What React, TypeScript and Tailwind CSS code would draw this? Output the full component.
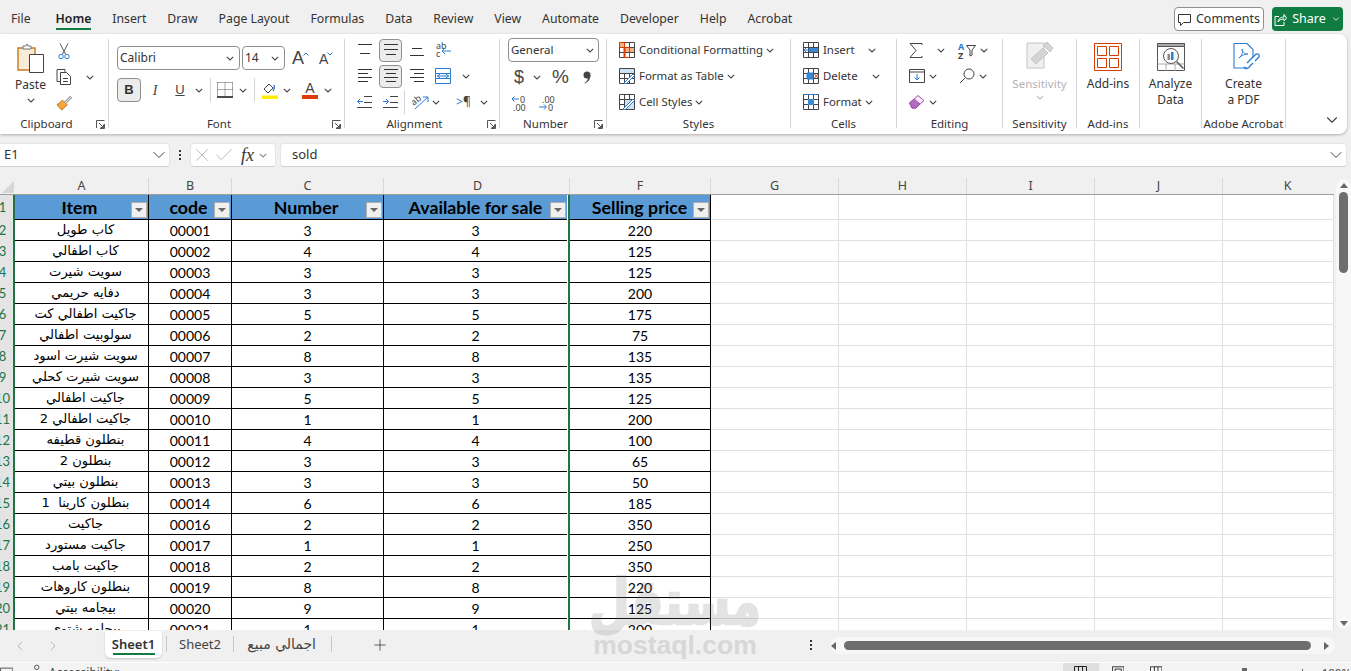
import { ChevronDown, ChevronLeft, ChevronRight, Plus, X, Check } from 'lucide-react';

const tabs = ['Review', 'View', 'Automate', 'Developer', 'Help', 'Acrobat'];

const items = [
  'كاب طويل', 'كاب اطفالي', 'سويت شيرت', 'دفايه حريمي', 'جاكيت اطفالي كت', 'سولوبيت اطفالي', 'سويت شيرت اسود',
  'سويت شيرت كحلي', 'جاكيت اطفالي', 'جاكيت اطفالي 2', 'بنطلون قطيفه', 'بنطلون 2', 'بنطلون بيتي', 'بنطلون كارينا  1',
  'جاكيت', 'جاكيت مستورد', 'جاكيت بامب', 'بنطلون كاروهات', 'بيجامه بيتي', 'بيجامه شتوي',
];
const codes = ['00001', '00002', '00003', '00004', '00005', '00006', '00007', '00008', '00009', '00010', '00011', '00012', '00013', '00014', '00016', '00017', '00018', '00019', '00020', '00021'];
const numbers = [3, 4, 3, 3, 5, 2, 8, 3, 5, 1, 4, 3, 3, 6, 2, 1, 2, 8, 9, 1];
const prices = [220, 125, 125, 200, 175, 75, 135, 135, 125, 200, 100, 65, 50, 185, 350, 250, 350, 220, 125, 200];

function Chev({ className = 'text-[#444]' }: { className?: string }) {
  return (
    <svg width="8" height="5" viewBox="0 0 8 5" className={className} fill="none" stroke="currentColor" strokeWidth="1.1">
      <path d="M0.8 0.8 4 4 7.2 0.8" />
    </svg>
  );
}

function Launcher() {
  return (
    <svg width="9" height="9" viewBox="0 0 9 9" fill="none" stroke="#555" strokeWidth="1">
      <path d="M0.5 8V0.5H8.5M8.5 4V8.5H4M3 3l4.5 4.5M7.5 4.5v3h-3" />
    </svg>
  );
}

function Group({ label, launcher, className, children }: { label?: string; launcher?: boolean; className: string; children: React.ReactNode }) {
  return (
    <div className={`h-[89px] shrink-0 border-r border-[#d4d4d4] flex flex-col ${className}`}>
      <div className="h-[78px] shrink-0">{children}</div>
      <div className="h-[14px] shrink-0 flex items-center text-[11.5px] leading-[14px] text-[#333] whitespace-nowrap">
        <div className="flex-1 text-center">{label}</div>
        {launcher && (
          <div className="w-[15px] flex justify-center">
            <Launcher />
          </div>
        )}
      </div>
    </div>
  );
}

function Lines({ rows }: { rows: number[][] }) {
  return (
    <svg width="16" height="16" viewBox="0 0 16 16" stroke="#333" strokeWidth="1">
      {rows.map((r, i) => (
        <path key={i} d={`M${r[0]} ${r[2] + 0.5}H${r[1]}`} />
      ))}
    </svg>
  );
}

function GridIcon({ children }: { children?: React.ReactNode }) {
  return (
    <svg width="16" height="16" viewBox="0 0 16 16" fill="none" stroke="#444" strokeWidth="1">
      <path d="M0.5 0.5h15v15h-15zM0.5 5.5h15M0.5 10.5h15M5.5 0.5v15M10.5 0.5v15" />
      {children}
    </svg>
  );
}

function StyleRow({ icon, text }: { icon: React.ReactNode; text: string }) {
  return (
    <div className="h-[22px] flex items-center">
      {icon}
      <span className="ml-[4px] mr-[3px] text-[11.4px] text-[#333]">{text}</span>
      <Chev />
    </div>
  );
}

function HeaderCell({ className, text }: { className: string; text: string }) {
  return (
    <div className={`relative h-full shrink-0 bg-[#5b9bd5] border-b border-black flex items-center justify-center text-[17.8px] font-bold text-black ${className}`}>
      {text}
      <div className="absolute right-[1px] top-[7px] w-[16px] h-[16px] bg-[#f0f0f0] border border-[#b0b0b0] flex items-center justify-center">
        <div className="w-0 h-0 border-l-[4px] border-r-[4px] border-t-[4px] border-l-transparent border-r-transparent border-t-[#666]" />
      </div>
    </div>
  );
}

function Marker() {
  return <div className="w-[3px] h-full shrink-0 bg-[#217346] border-l border-white" />;
}

function EmptyCells() {
  return (
    <>
      <div className="w-[128px] h-full shrink-0 border-r border-b border-[#e0e0e0]" />
      <div className="w-[128px] h-full shrink-0 border-r border-b border-[#e0e0e0]" />
      <div className="w-[128px] h-full shrink-0 border-r border-b border-[#e0e0e0]" />
      <div className="w-[128px] h-full shrink-0 border-r border-b border-[#e0e0e0]" />
      <div className="w-[111px] h-full shrink-0 border-r border-b border-[#e0e0e0]" />
    </>
  );
}

function RowNum({ n }: { n: number }) {
  return (
    <div className="w-[15px] h-full shrink-0 bg-[#e4e4e4] border-r-2 border-[#217346] overflow-hidden flex justify-start items-center text-[13px] text-[#217346]">
      <div className="w-[5px] flex justify-center">
        <span>{n}</span>
      </div>
    </div>
  );
}

function ColHead({ className, text }: { className: string; text: string }) {
  return <div className={`h-full shrink-0 border-r border-[#d8d8d8] flex items-center justify-center text-[12.5px] text-[#444] ${className}`}>{text}</div>;
}

export default function App() {
  return (
    <div className="relative w-[1351px] h-[671px] overflow-hidden bg-[#f0f0f0] flex flex-col font-['Noto_Sans','DejaVu_Sans',sans-serif] text-[#333]">
      {/* tabs */}
      <div className="h-[34px] flex shrink-0 text-[12.25px] text-[#333]">
        <div className="flex gap-[21px] pl-[11px] pt-[10px] leading-[18px] flex-1">
          <span className="mr-[4px]">File</span>
          <span className="relative font-semibold text-[#222]">
            Home
            <span className="absolute left-0 right-0 top-[18px] h-[2px] bg-[#107c41]" />
          </span>
          <span>Insert</span>
          <span>Draw</span>
          <span>Page Layout</span>
          <span>Formulas</span>
          <span>Data</span>
          {tabs.map((t) => (
            <span key={t}>{t}</span>
          ))}
        </div>
        <div className="flex pt-[7px] pr-[8px] gap-[8px] text-[12.5px]">
          <div className="w-[90px] h-[24px] bg-white border border-[#8f8f8f] rounded-[4px] flex items-center justify-center gap-[5px]">
            <svg width="13" height="13" viewBox="0 0 13 13" fill="none" stroke="#333">
              <path d="M0.5 1.5h12v8h-7l-3 3v-3h-2z" />
            </svg>
            Comments
          </div>
          <div className="w-[71px] h-[24px] bg-[#107c41] rounded-[4px] flex items-center justify-center gap-[5px] text-white">
            <svg width="13" height="13" viewBox="0 0 13 13" fill="none" stroke="#fff">
              <path d="M5 3.5H1v9h9V9M4 9c0-3 3-5 6-5V1.5L12.5 5 10 8V6C7.500 6 5 7 4 9z" />
            </svg>
            Share
            <ChevronDown size={10} />
          </div>
        </div>
      </div>

      {/* ribbon */}
      <div className="relative h-[100px] w-[1347px] shrink-0 bg-white rounded-r-[8px] shadow-[0_1px_3px_rgba(0,0,0,0.28)] flex pt-[5px]">
        <Group label="Clipboard" launcher className="w-[109px]">
          <div className="flex pl-[14px]">
            <div className="w-[33px] flex flex-col items-center pt-[4px]">
              <svg width="28" height="31" viewBox="0 0 28 31" fill="none">
                <path d="M1 5h17v22H1z" fill="#f8ecd8" stroke="#c67a1f" strokeWidth="1.4" />
                <path d="M6 5V3h3l1-2 1 2h3v3H6z" fill="#fff" stroke="#777" />
                <path d="M12.500 11.500h14v18h-14z" fill="#fff" stroke="#444" />
              </svg>
              <span className="text-[12px] leading-[18px] mt-[2px]">Paste</span>
              <div className="mt-[4px]"><Chev /></div>
            </div>
            <div className="ml-[9px] mt-px flex flex-col gap-[4px]">
              <div className="h-[22px] w-[16px] flex items-center justify-center">
                <svg width="12" height="17" viewBox="0 0 12 17" fill="none" stroke="#555">
                  <path d="M2 0.500 7.500 11M10 0.500 4.500 11" />
                  <circle cx="3" cy="13.500" r="2.200" stroke="#2b7cd3" />
                  <circle cx="9" cy="13.500" r="2.200" stroke="#2b7cd3" />
                </svg>
              </div>
              <div className="h-[22px] flex items-center w-[38px]">
                <svg width="16" height="16" viewBox="0 0 16 16" fill="none" stroke="#444">
                  <path d="M4 12.500H1V0.500h8v3" />
                  <path d="M4.500 3.500h6l4 4v8h-10z" fill="#fff" />
                  <path d="M7 9.500h5M7 12.500h5" />
                </svg>
                <div className="ml-[14px]"><Chev /></div>
              </div>
              <div className="h-[22px] w-[16px] flex items-center justify-center">
                <svg width="17" height="16" viewBox="0 0 17 16" fill="none">
                  <path d="M1 10 7 5l5 5-6 5.500L1 10z" fill="#f2a93b" stroke="#c9702a" />
                  <path d="M9 7l6-6 1.500 1.500-6 6" fill="#eee" stroke="#666" />
                </svg>
              </div>
            </div>
          </div>
        </Group>

        <Group label="Font" launcher className="w-[236px]">
          <div className="pl-[8px] pt-[7px] flex flex-col gap-[8px]">
            <div className="flex items-center h-[24px]">
              <div className="w-[123px] h-[24px] border border-[#8f8f8f] rounded-[4px] flex items-center justify-between px-[2px] pr-[5px] text-[12px]">
                <span className="text-[12px]">Calibri</span>
                <Chev />
              </div>
              <div className="ml-[2px] w-[43px] h-[24px] border border-[#8f8f8f] rounded-[4px] flex items-center justify-between px-[2px] pr-[5px] text-[12px]">
                <span>14</span>
                <Chev />
              </div>
              <div className="ml-[7px] w-[17px] flex items-start">
                <span className="text-[18px] leading-[22px] font-['Liberation_Sans'] text-[#444]">A</span>
                <svg className="mt-[5px] -ml-[1px] shrink-0" width="6" height="4" viewBox="0 0 6 4" fill="none" stroke="#2b7cd3"><path d="M0.500 3.500 3 1l2.500 2.500" /></svg>
              </div>
              <div className="ml-[10px] w-[17px] flex items-start">
                <span className="text-[14px] leading-[22px] mt-[1px] font-['Liberation_Sans'] text-[#444]">A</span>
                <svg className="mt-[5px] -ml-[1px] shrink-0" width="6" height="4" viewBox="0 0 6 4" fill="none" stroke="#2b7cd3"><path d="M0.500 0.500 3 3l2.500-2.500" /></svg>
              </div>
            </div>
            <div className="flex items-center h-[24px]">
              <div className="w-[24px] h-[24px] bg-[#ececec] border border-[#8f8f8f] rounded-[4px] flex items-center justify-center text-[13px] font-bold font-['Liberation_Sans']">B</div>
              <span className="ml-[9px] w-[10px] text-[14px] text-center italic font-['Liberation_Serif'] text-[#444]">I</span>
              <span className="ml-[15px] w-[10px] text-[13px] text-center underline font-['Liberation_Sans'] text-[#444]">U</span>
              <div className="ml-[10px]"><Chev /></div>
              <div className="ml-[7px] w-px h-[24px] bg-[#d4d4d4]" />
              <svg className="ml-[6px]" width="16" height="16" viewBox="0 0 16 16" fill="none" stroke="#555">
                <path d="M0.500 0.500h15M0.500 0.500v13M15.500 0.500v13M8 0.500v13M0.500 7.500h15" strokeDasharray="1 1" />
                <path d="M0 15h16" stroke="#111" strokeWidth="1.500" />
              </svg>
              <div className="ml-[6px]"><Chev /></div>
              <div className="ml-[7px] w-px h-[24px] bg-[#d4d4d4]" />
              <svg className="ml-[6px]" width="17" height="17" viewBox="0 0 17 17" fill="none">
                <path d="M3 7l5-5 4 4-5 5z" stroke="#444" />
                <path d="M12 9c1-2 2-3 1-6" stroke="#2b7cd3" strokeWidth="1.400" />
                <path d="M1 13.500h16V17H1z" fill="#ffee00" />
              </svg>
              <div className="ml-[5px]"><Chev /></div>
              <div className="ml-[11px] w-[16px] flex flex-col items-center">
                <span className="text-[14px] leading-[13px] font-['Liberation_Sans'] text-[#444]">A</span>
                <span className="w-[16px] h-[4px] bg-[#e03a0b]" />
              </div>
              <div className="ml-[6px]"><Chev /></div>
            </div>
          </div>
        </Group>

        <Group label="Alignment" launcher className="w-[155px]">
          <div className="pl-[8px] flex flex-col gap-[4px]">
            <div className="h-[22px] flex items-center">
              <div className="w-[23px] flex justify-center"><Lines rows={[[1, 15, 2], [3, 13, 11]]} /></div>
              <div className="ml-[3px] w-[23px] h-[23px] bg-[#ececec] border border-[#8f8f8f] rounded-[4px] flex items-center justify-center"><Lines rows={[[1, 15, 2], [1, 15, 7], [3, 13, 12]]} /></div>
              <div className="ml-[3px] w-[23px] flex justify-center"><Lines rows={[[3, 13, 6], [1, 15, 13]]} /></div>
              <div className="ml-[3px] w-[23px] flex justify-center">
                <svg width="16" height="18" viewBox="0 0 16 18">
                  <text x="1" y="8" fontSize="9" fill="#444">ab</text>
                  <text x="1" y="16" fontSize="9" fill="#444">c</text>
                  <path d="M16 10H8M10 7l-3 3 3 3" fill="none" stroke="#2b7cd3" />
                </svg>
              </div>
            </div>
            <div className="h-[22px] flex items-center">
              <div className="w-[23px] flex justify-center"><Lines rows={[[1, 15, 1], [1, 11, 5], [1, 15, 9], [1, 11, 13]]} /></div>
              <div className="ml-[3px] w-[23px] h-[23px] bg-[#ececec] border border-[#8f8f8f] rounded-[4px] flex items-center justify-center"><Lines rows={[[1, 15, 1], [3, 13, 5], [1, 15, 9], [3, 13, 13]]} /></div>
              <div className="ml-[3px] w-[23px] flex justify-center"><Lines rows={[[1, 15, 1], [5, 15, 5], [1, 15, 9], [5, 15, 13]]} /></div>
              <div className="ml-[3px] w-[23px] flex justify-center">
                <svg width="16" height="16" viewBox="0 0 16 16" fill="none" stroke="#2b7cd3">
                  <path d="M0.500 0.500h15v15H0.500zM0.500 5.500h15M0.500 10.500h15" />
                  <path d="M2 8h12M5 6 2.500 8 5 10M11 6l2.500 2L11 10" />
                </svg>
              </div>
              <div className="ml-[8px]"><Chev /></div>
            </div>
            <div className="h-[22px] flex items-center">
              <div className="w-[23px] flex justify-center">
                <svg width="15" height="14" viewBox="0 0 15 14" fill="none" stroke="#444">
                  <path d="M7 1.500h8M7 7.500h8M0 12.500h15" />
                  <path d="M6 6.500H0.500M3 4 .5 6.500 3 9" stroke="#2b7cd3" />
                </svg>
              </div>
              <div className="ml-[3px] w-[23px] flex justify-center">
                <svg width="15" height="14" viewBox="0 0 15 14" fill="none" stroke="#444">
                  <path d="M7 1.500h8M7 7.500h8M0 12.500h15" />
                  <path d="M0 6.500h5.500M3 4l2.500 2.500L3 9" stroke="#2b7cd3" />
                </svg>
              </div>
              <div className="ml-[2px] w-px h-[24px] bg-[#d4d4d4]" />
              <div className="ml-[7px] w-[17px] flex justify-center">
                <svg width="17" height="17" viewBox="0 0 17 17" fill="none">
                  <text x="0" y="9" fontSize="9" fill="#444" transform="rotate(-40 5 8)">ab</text>
                  <path d="M3 15 16 3M11 3h5v5" stroke="#2b7cd3" />
                </svg>
              </div>
              <div className="ml-[3px]"><Chev /></div>
              <span className="ml-[16px] text-[12px] text-[#2b7cd3] leading-[14px]">&gt;<span className="text-[#444]">¶</span></span>
              <div className="ml-[9px]"><Chev /></div>
            </div>
          </div>
        </Group>

        <Group label="Number" launcher className="w-[107px]">
          <div className="pl-[8px] -mt-px">
            <div className="w-[91px] h-[24px] border border-[#8f8f8f] rounded-[4px] flex items-center justify-between pl-[2px] pr-[4px] text-[11.5px]">
              <span>General</span>
              <Chev />
            </div>
            <div className="flex items-center h-[22px] mt-[4px]">
              <span className="ml-[6px] w-[10px] text-[18px] leading-[22px] font-['Liberation_Sans'] text-[#444]">$</span>
              <div className="ml-[9px]"><Chev /></div>
              <span className="ml-[11px] w-[18px] text-[19px] leading-[22px] font-['Liberation_Sans'] text-[#444]">%</span>
              <svg className="ml-[13px]" width="8" height="13" viewBox="0 0 8 13" fill="#444">
                <circle cx="4" cy="4" r="3.500" />
                <path d="M7.500 4c0 4-2 7-5.500 8.500L1.500 12C4 10.500 5 8.500 5 6z" />
              </svg>
            </div>
            <div className="flex items-center h-[22px] mt-[4px]">
              <svg className="ml-[3px]" width="17" height="17" viewBox="0 0 17 17" fill="none">
                <text x="9" y="7.500" fontSize="9" fill="#444">0</text>
                <text x="2" y="16" fontSize="9" fill="#444">.00</text>
                <path d="M8 4H1M3.500 1.500 1 4l2.500 2.500" stroke="#2b7cd3" />
              </svg>
              <svg className="ml-[10px]" width="18" height="17" viewBox="0 0 18 17" fill="none">
                <text x="4" y="7.500" fontSize="9" fill="#444">.00</text>
                <text x="10" y="16" fontSize="9" fill="#444">0</text>
                <path d="M1 12h7M6 9.500 8.500 12 6 14.500" stroke="#2b7cd3" />
              </svg>
            </div>
          </div>
        </Group>

        <Group label="Styles" className="w-[184px]">
          <div className="pl-[12px] flex flex-col gap-[4px]">
            <StyleRow
              text="Conditional Formatting"
              icon={
                <GridIcon>
                  <path d="M1 1h4v4H1zM11 6h4v4h-4zM6 6h4v4H6z" fill="#f4b183" stroke="none" />
                  <path d="M5.500 0.500h0M5 5h1v11H5zM0.500 0.500h5v5h-5zM5.500 5.500h5v10h-5z" stroke="#d83b01" />
                </GridIcon>
              }
            />
            <StyleRow
              text="Format as Table"
              icon={
                <GridIcon>
                  <path d="M1 1h14v4H1z" fill="#cfe3f7" stroke="none" />
                  <path d="M5 15 14 6l1.500 1.500L7 16z" fill="#fff" stroke="#2b7cd3" />
                </GridIcon>
              }
            />
            <StyleRow
              text="Cell Styles"
              icon={
                <GridIcon>
                  <path d="M6 6h9v9H6z" fill="#cfe3f7" stroke="none" />
                  <path d="M4 15 14 5l1.500 1.500L6 16z" fill="#fff" stroke="#2b7cd3" />
                </GridIcon>
              }
            />
          </div>
        </Group>

        <Group label="Cells" className="w-[106px]">
          <div className="pl-[12px] flex flex-col gap-[4px] text-[11.4px]">
            <div className="h-[22px] flex items-center">
              <GridIcon>
                <path d="M6 6h9v4H6z" fill="#3b8ad8" stroke="none" />
                <path d="M8 8H1M3.500 5.500 1 8l2.500 2.500" stroke="#2b7cd3" />
              </GridIcon>
              <span className="ml-[4px] w-[45px]">Insert</span>
              <Chev />
            </div>
            <div className="h-[22px] flex items-center">
              <GridIcon>
                <path d="M4 5h6v6H4z" fill="#3b8ad8" stroke="#2b7cd3" />
                <path d="M11.500 6l3.500 4M15 6l-3.500 4" stroke="#d83b01" />
              </GridIcon>
              <span className="ml-[4px] w-[49px]">Delete</span>
              <Chev />
            </div>
            <div className="h-[22px] flex items-center">
              <GridIcon>
                <path d="M5 5h6v6H5z" fill="#3b8ad8" stroke="none" />
                <path d="M2 0.500h12" stroke="#2b7cd3" />
              </GridIcon>
              <span className="ml-[4px] mr-[3px]">Format</span>
              <Chev />
            </div>
          </div>
        </Group>

        <Group label="Editing" className="w-[106px]">
          <div className="pl-[12px] flex flex-col gap-[4px]">
            <div className="h-[22px] flex items-center">
              <svg width="14" height="15" viewBox="0 0 14 15" fill="none" stroke="#444"><path d="M13 2V0.500H1L7 7.500l-6 7h12V13" /></svg>
              <div className="ml-[14px]"><Chev /></div>
              <svg className="ml-[13px]" width="19" height="17" viewBox="0 0 19 17" fill="none">
                <text x="0" y="8" fontSize="9" fontWeight="700" fill="#2b7cd3">A</text>
                <text x="0" y="16.500" fontSize="9" fontWeight="700" fill="#444">Z</text>
                <path d="M8.500 3.500h9L14 8v5l-2 1V8z" stroke="#444" />
              </svg>
              <div className="ml-[3px]"><Chev /></div>
            </div>
            <div className="h-[22px] flex items-center">
              <svg width="16" height="14" viewBox="0 0 16 14" fill="none" stroke="#444"><path d="M0.500 0.500h15v13H0.500zM0.500 3h15" /><path d="M8 5v6M5.500 8.500 8 11l2.500-2.500" stroke="#2b7cd3" /></svg>
              <div className="ml-[4px]"><Chev /></div>
              <svg className="ml-[22px]" width="16" height="16" viewBox="0 0 16 16" fill="none" stroke="#444"><circle cx="10" cy="6" r="5" /><path d="M6 10l-5 5" /></svg>
              <div className="ml-[4px]"><Chev /></div>
            </div>
            <div className="h-[22px] flex items-center">
              <svg width="16" height="14" viewBox="0 0 16 14" fill="none"><path d="M0.500 8 9 0.500l6 5L7 13H3z" fill="#fbe8fb" stroke="#a04dae" /><path d="M0.500 8 5 4l6 5-4 4H3z" fill="#b16cc0" stroke="#a04dae" /></svg>
              <div className="ml-[4px]"><Chev /></div>
            </div>
          </div>
        </Group>

        <Group label="Sensitivity" className="w-[74px]">
          <div className="flex flex-col items-center pt-[2px]">
            <svg width="28" height="30" viewBox="0 0 28 30" fill="none">
              <path d="M1 2h17v25H1z" fill="#f0f0f0" stroke="#c4c4c4" />
              <path d="M5 18 17 7l5 5-12 11z" fill="#d4d4d4" stroke="#c4c4c4" />
              <path d="M17 4l4-3 6 6-3 4z" fill="#d4d4d4" stroke="#c4c4c4" />
            </svg>
            <span className="text-[11.5px] leading-[16px] mt-[5px] text-[#b3b3b3]">Sensitivity</span>
            <div className="mt-[3px]"><Chev className="text-[#bbb]" /></div>
          </div>
        </Group>

        <Group label="Add-ins" className="w-[63px]">
          <div className="flex flex-col items-center pt-[4px]">
            <svg width="28" height="28" viewBox="0 0 28 28" fill="none" stroke="#d83b01">
              <path d="M0.500 0.500h27v27H0.500z" />
              <path d="M3.500 3.500h9v9h-9zM15.500 3.500h9v9h-9zM3.500 15.500h9v9h-9zM15.500 15.500h9v9h-9z" />
            </svg>
            <span className="text-[12px] leading-[16px] mt-[5px]">Add-ins</span>
          </div>
        </Group>

        <Group className="w-[62px]">
          <div className="flex flex-col items-center pt-[4px] text-[12px] leading-[16px] text-center">
            <svg width="28" height="28" viewBox="0 0 28 28" fill="none" stroke="#555">
              <path d="M0.500 0.500h27v27H0.500z" />
              <path d="M0.500 0.500h27v3h-27z" fill="#aaa" />
              <path d="M0.500 21h27M9 21v7M18 21v7" stroke="#aaa" />
              <circle cx="14" cy="13" r="7.500" fill="#fff" />
              <path d="M19.500 18.500l7 7" strokeWidth="1.500" />
              <path d="M10.500 11h2.500v6h-2.500z" fill="#888" stroke="none" />
              <path d="M14 9h2.500v8H14z" fill="#2b7cd3" stroke="none" />
            </svg>
            <span className="mt-[5px]">Analyze</span>
            <span>Data</span>
          </div>
        </Group>

        <Group label="Adobe Acrobat" className="w-[84px]">
          <div className="flex flex-col items-center pt-[4px] pl-[5px] text-[12px] leading-[16px] text-center">
            <svg width="28" height="28" viewBox="0 0 28 28" fill="none" stroke="#2b7cd3">
              <path d="M2 0.500h13l6 6v8M15 25H2V0.500" strokeWidth="1.100" />
              <path d="M7 15c3-2 4-6 3-9 0 3 3 5 6 5-3 0-6 1-9 4z" strokeWidth="0.900" />
              <path d="M15 20l8-8c3-3 6 1 3 3l-3 3M12 24c2 3 5 1 6-1l3-3" strokeWidth="1.400" />
            </svg>
            <span className="mt-[5px] -ml-[5px]">Create</span>
            <span className="-ml-[5px]">a PDF</span>
          </div>
        </Group>

        <div className="flex-1 flex justify-end items-end pr-[6px] pb-[5px]">
          <ChevronDown size={18} strokeWidth={1.5} className="text-[#444]" />
        </div>
      </div>

      {/* formula bar */}
      <div className="h-[24px] mt-[9px] shrink-0 flex items-center text-[13px]">
        <div className="w-[170px] h-full bg-white border border-l-0 border-[#e4e4e4] border-b-[#d0d0d0] rounded-r-[4px] flex items-center justify-between pl-[4px]">
          <span>E1</span>
          <ChevronDown size={20} strokeWidth={1.2} className="text-[#444]" />
        </div>
        <div className="w-[20px] flex flex-col items-center gap-[2px]">
          <span className="w-[2px] h-[2px] bg-[#333]" />
          <span className="w-[2px] h-[2px] bg-[#333]" />
          <span className="w-[2px] h-[2px] bg-[#333]" />
        </div>
        <div className="w-[86px] h-full bg-white border border-[#e4e4e4] border-b-[#d0d0d0] rounded-[4px] flex items-center">
          <X size={22} strokeWidth={1} className="text-[#b5b5b5] shrink-0" />
          <Check size={22} strokeWidth={1} className="text-[#b5b5b5] shrink-0" />
          <span className="ml-[6px] text-[18px] italic font-['Liberation_Serif'] text-[#333]">fx</span>
          <div className="ml-[5px]"><Chev className="text-[#888]" /></div>
        </div>
        <div className="ml-[4px] w-[1067px] h-full bg-white border border-[#e4e4e4] border-b-[#d0d0d0] rounded-[4px] flex items-center justify-between pl-[11px]">
          <span>sold</span>
          <ChevronDown size={20} strokeWidth={1.2} className="text-[#444]" />
        </div>
      </div>

      {/* sheet */}
      <div className="mt-[11px] h-[452px] shrink-0 flex overflow-hidden">
        <div className="w-[1334px] shrink-0 flex flex-col">
          <div className="h-[17px] shrink-0 flex border-b border-[#9f9f9f]">
            <div className="w-[15px] h-full shrink-0 flex items-end justify-end pr-[1px] pb-px">
              <svg width="12" height="12" viewBox="0 0 12 12"><path d="M12 0v12H0z" fill="#d6d6d6" /></svg>
            </div>
            <ColHead className="w-[134px]" text="A" />
            <ColHead className="w-[83px]" text="B" />
            <ColHead className="w-[152px]" text="C" />
            <ColHead className="w-[186px] pl-[2px]" text="D" />
            <ColHead className="w-[141px]" text="F" />
            <ColHead className="w-[128px]" text="G" />
            <ColHead className="w-[128px]" text="H" />
            <ColHead className="w-[128px]" text="I" />
            <ColHead className="w-[128px]" text="J" />
            <ColHead className="w-[111px] pl-[18px] border-r-0" text="K" />
          </div>
          <div className="flex-1 bg-white overflow-hidden font-['Lato','DejaVu_Sans',sans-serif] text-[14px] text-black">
            <div className="h-[25px] flex">
              <RowNum n={1} />
              <HeaderCell className="w-[134px] border-r pr-[4px]" text="Item" />
              <HeaderCell className="w-[83px] border-r pr-[3px]" text="code" />
              <HeaderCell className="w-[152px] border-r pr-[3px]" text="Number" />
              <HeaderCell className="w-[183px]" text="Available for sale" />
              <Marker />
              <HeaderCell className="w-[141px] border-r pr-[1px]" text="Selling price" />
              <EmptyCells />
            </div>
            {items.map((item, i) => (
              <div key={codes[i]} className="h-[21px] flex">
                <RowNum n={i + 2} />
                <div dir="rtl" className="w-[134px] h-full shrink-0 border-r border-b border-black flex items-center justify-center pl-[8px] text-[13.1px] whitespace-pre font-['DejaVu_Sans']">{item}</div>
                <div className="w-[83px] h-full shrink-0 border-r border-b border-black flex items-center justify-center">{codes[i]}</div>
                <div className="w-[152px] h-full shrink-0 border-r border-b border-black flex items-center justify-center">{numbers[i]}</div>
                <div className="w-[183px] h-full shrink-0 border-b border-black flex items-center justify-center">{numbers[i]}</div>
                <Marker />
                <div className="w-[141px] h-full shrink-0 border-r border-b border-black flex items-center justify-center">{prices[i]}</div>
                <EmptyCells />
              </div>
            ))}
          </div>
        </div>
        <div className="flex-1 flex justify-end pt-[1px]">
          <div className="w-[15px] h-[450px] bg-[#f7f7f7] rounded-full flex flex-col items-center">
            <div className="mt-[4px] w-0 h-0 border-l-[4px] border-r-[4px] border-b-[5px] border-l-transparent border-r-transparent border-b-[#666]" />
            <div className="mt-[4px] w-[9px] h-[81px] bg-[#6e6e6e] rounded-full" />
            <div className="mt-auto mb-[3px] w-0 h-0 border-l-[4px] border-r-[4px] border-t-[5px] border-l-transparent border-r-transparent border-t-[#666]" />
          </div>
        </div>
      </div>

      {/* sheet tabs */}
      <div className="h-[32px] shrink-0 flex items-start text-[13px] text-[#444]">
        <ChevronLeft size={16} strokeWidth={1.2} className="ml-[12px] mt-[8px] text-[#aaa]" />
        <ChevronRight size={16} strokeWidth={1.2} className="ml-[17px] mt-[8px] text-[#aaa]" />
        <div className="relative ml-[44px] mt-px w-[57px] h-[27px] bg-white rounded-b-[6px] shadow-[0_1px_2px_rgba(0,0,0,0.18)] flex justify-center font-semibold text-[#333]">
          <span className="leading-[26px]">Sheet1</span>
          <span className="absolute left-[8px] right-[7px] top-[22px] h-[2px] bg-[#107c41]" />
        </div>
        <div className="ml-[4px] mt-[6px] w-px h-[16px] bg-[#c8c8c8]" />
        <span className="ml-[12px] mt-[5px] leading-[18px]">Sheet2</span>
        <div className="ml-[12px] mt-[6px] w-px h-[16px] bg-[#c8c8c8]" />
        <span dir="rtl" className="ml-[14px] mt-[5px] w-[68px] leading-[18px] whitespace-nowrap font-['DejaVu_Sans'] text-[14px]">اجمالي مبيع</span>
        <div className="ml-[15px] mt-[6px] w-px h-[16px] bg-[#c8c8c8]" />
        <Plus size={18} strokeWidth={1.1} className="ml-[39px] mt-[6px] text-[#444]" />
        <div className="ml-[421px] mt-[10px] flex flex-col gap-[2px]">
          <span className="w-[2px] h-[2px] bg-[#333]" />
          <span className="w-[2px] h-[2px] bg-[#333]" />
          <span className="w-[2px] h-[2px] bg-[#333]" />
        </div>
        <div className="ml-[18px] mt-[7px] w-[505px] h-[17px] bg-[#f7f7f7] rounded-full flex items-center">
          <div className="ml-[1px] w-0 h-0 border-t-[4px] border-b-[4px] border-r-[5px] border-t-transparent border-b-transparent border-r-[#666]" />
          <div className="ml-[8px] w-[467px] h-[9px] bg-[#6e6e6e] rounded-full" />
          <div className="ml-[13px] w-0 h-0 border-t-[4px] border-b-[4px] border-l-[5px] border-t-transparent border-b-transparent border-l-[#666]" />
        </div>
      </div>

      {/* status bar */}
      <div className="h-[9px] shrink-0 border-t border-white bg-[#f3f3f3] overflow-hidden flex items-start text-[12px]">
        <svg className="mt-[4px]" width="15" height="12" viewBox="0 0 15 12" fill="none" stroke="#444"><path d="M0.500 0.500h14v11h-14z" /></svg>
        <svg className="ml-[18px] mt-[1px]" width="13" height="12" viewBox="0 0 13 12" fill="none" stroke="#444"><circle cx="6.500" cy="3" r="2.500" /><path d="M1 9h11" /></svg>
        <span className="ml-[6px] mt-[2px] leading-[16px] text-[#444]">Accessibility: Investigate</span>
        <div className="ml-[893px] w-[40px] h-[8px] bg-[#dedede] flex justify-center pt-[3px]">
          <svg width="13" height="6" viewBox="0 0 13 6" fill="none" stroke="#222"><path d="M0.500 6V0.500h12V6M4.500 0.500V6M8.500 0.500V6" /></svg>
        </div>
        <svg className="ml-[13px] mt-[3px]" width="14" height="6" viewBox="0 0 14 6" fill="none" stroke="#222"><path d="M0.500 6V0.500h13V6M3.500 6V3h7v3" /></svg>
        <svg className="ml-[26px] mt-[3px]" width="14" height="6" viewBox="0 0 14 6" fill="none" stroke="#222"><path d="M0.500 6V0.500h13V6M5 0.500V6M9 0.500V6" /></svg>
        <div className="ml-[80px] mt-[5px] w-[5px] h-[4px] bg-[#666]" />
        <div className="ml-[55px] mt-[6px] w-px h-[3px] bg-[#666]" />
        <span className="ml-[19px] mt-[3px] leading-[14px] text-[11.5px] text-[#444]">100%</span>
      </div>

      {/* watermark */}
      <div className="absolute left-[590px] top-[573px] w-[170px] flex flex-col items-center pointer-events-none text-[#777] opacity-20 font-bold">
        <span dir="rtl" className="text-[47px] leading-[58px] scale-y-[1.35] font-['DejaVu_Sans'] [-webkit-text-stroke:2px_#777]">مستقل</span>
        <span className="text-[26.5px] leading-[26px] font-['Liberation_Sans'] mt-[1px]">mostaql.com</span>
      </div>
    </div>
  );
}
